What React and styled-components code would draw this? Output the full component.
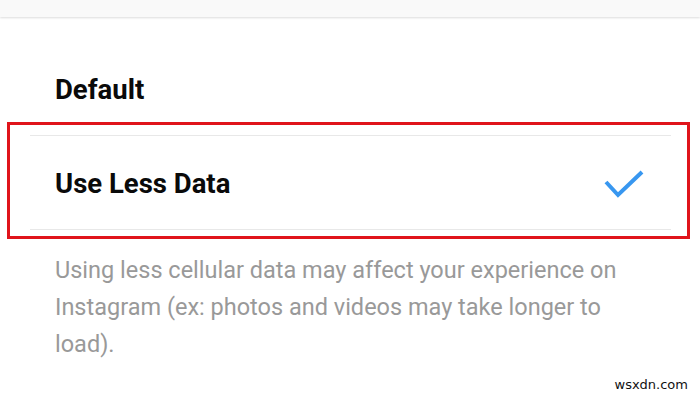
import styled, { createGlobalStyle } from 'styled-components';

const GlobalStyle = createGlobalStyle`
  html, body {
    margin: 0;
    padding: 0;
    background: #fff;
  }
  body {
    font-family: Roboto, "Liberation Sans", sans-serif;
  }
`;

const options = [
  { id: 'default', label: 'Default', selected: false },
  { id: 'less', label: 'Use Less Data', selected: true },
];

const CheckIcon = () => (
  <svg width="40" height="28" viewBox="0 0 40 28" fill="none">
    <path
      d="M2 12 L14 25 L38 2"
      stroke="#3897f0"
      strokeWidth="4"
      strokeLinecap="butt"
      strokeLinejoin="miter"
    />
  </svg>
);

const App = () => {
  return (
    <Screen>
      <GlobalStyle />
      <TopBar />
      <OptionList>
        {options.map((option) => (
          <Option key={option.id}>
            <Label>{option.label}</Label>
            {option.selected && <CheckIcon />}
          </Option>
        ))}
        <Highlight />
      </OptionList>
      <Note>
        Using less cellular data may affect your experience on Instagram (ex:
        photos and videos may take longer to load).
      </Note>
      <Watermark>wsxdn.com</Watermark>
    </Screen>
  );
};

const Screen = styled.div`
  position: relative;
  width: 700px;
  height: 400px;
  overflow: hidden;
  background: #fff;
`;

const TopBar = styled.div`
  height: 17px;
  background: #f9f9f9;
  box-shadow: 0 1px 2px rgba(0, 0, 0, 0.14);
`;

const OptionList = styled.ul`
  position: relative;
  list-style: none;
  margin: 25px 0 0;
  padding: 0;
`;

const Option = styled.li`
  display: flex;
  align-items: center;
  justify-content: space-between;
  box-sizing: border-box;
  height: 94px;
  margin: 0 29px 0 30px;
  padding: 2px 27px 0 25px;
  border-bottom: 1px solid #e8e8e8;
`;

const Label = styled.span`
  font-size: 27.5px;
  font-weight: 700;
  color: #0a0a0a;
`;

const Highlight = styled.div`
  position: absolute;
  left: 7px;
  top: 80px;
  width: 677px;
  height: 111px;
  border: 3px solid #e0141b;
  pointer-events: none;
`;

const Note = styled.p`
  margin: 22px 0 0;
  padding: 0 0 0 55px;
  max-width: 600px;
  font-size: 23.5px;
  line-height: 37px;
  color: #999;
`;

const Watermark = styled.span`
  position: absolute;
  right: 12px;
  bottom: 8px;
  font-family: "DejaVu Sans", sans-serif;
  font-size: 13px;
  color: #111;
`;

export default App;
